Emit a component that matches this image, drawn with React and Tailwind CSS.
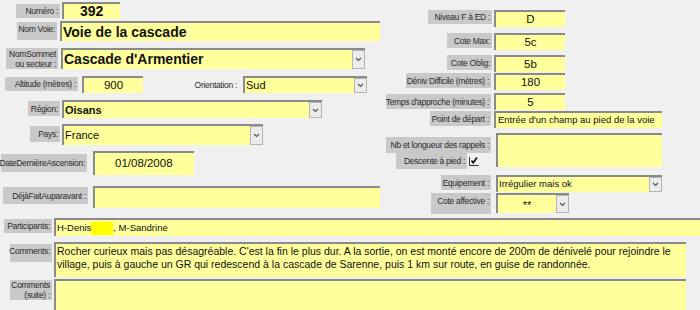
import React from "react";

const Label = ({ className = "", children }) => (
  <div
    className={`bg-[#c9c9c9] text-[#2a2a2a] text-[8.5px] leading-[10px] tracking-[-0.3px] whitespace-nowrap flex justify-end text-right pr-[2px] shrink-0 ${className}`}
  >
    {children}
  </div>
);

const Field = ({ className = "", children }) => (
  <div
    className={`bg-[#ffff9c] border-t-2 border-l-2 border-[#8a8a8a] flex shrink-0 overflow-hidden text-[#111] ${className}`}
  >
    {children}
  </div>
);

const Drop = () => (
  <div className="ml-auto w-[13px] h-full bg-[#ececec] border border-[#b4b4b4] flex items-center justify-center shrink-0">
    <svg width="7" height="5" viewBox="0 0 7 5">
      <path d="M1 1 L3.5 3.5 L6 1" stroke="#555" strokeWidth="1.2" fill="none" />
    </svg>
  </div>
);

export default function App() {
  return (
    <div className="w-[700px] h-[310px] bg-[#f0f0f0] overflow-hidden font-['Liberation_Sans',Arial,sans-serif]">
      <div className="flex h-[216px]">
        {/* Left column */}
        <div className="w-[380px] flex flex-col pt-[2px] shrink-0">
          <div className="flex h-[17px]">
            <Label className="ml-[16px] mt-[2px] w-[44px] h-[14px] items-center">Numéro :</Label>
            <Field className="ml-[2px] w-[58px] h-[17px] items-center pl-[16px] font-bold text-[14px]">392</Field>
          </div>
          <div className="flex h-[20px] mt-[2px]">
            <Label className="ml-[17px] mt-[1px] w-[40px] h-[18px] items-start pt-[2px]">Nom Voie:</Label>
            <Field className="ml-[3px] w-[320px] h-[20px] items-center pl-[1px] font-bold text-[14px] whitespace-nowrap">Voie de la cascade</Field>
          </div>
          <div className="flex h-[21px] mt-[7px]">
            <Label className="ml-[6px] w-[52px] h-[21px] items-center">NomSommet<br />ou secteur :</Label>
            <Field className="ml-[3px] w-[304px] h-[21px] items-center font-bold text-[14px] whitespace-nowrap">
              <span className="pl-[1px]">Cascade d'Armentier</span>
              <Drop />
            </Field>
          </div>
          <div className="flex h-[17px] mt-[7px]">
            <Label className="ml-[5px] mt-[1px] w-[73px] h-[14px] items-center">Altitude (mètres) :</Label>
            <Field className="ml-[4px] w-[61px] h-[17px] items-center justify-center text-[11.5px]">900</Field>
            <div className="ml-[50px] w-[47px] h-[17px] text-[8.5px] tracking-[-0.3px] whitespace-nowrap text-[#2a2a2a] flex items-center justify-end pt-[2px] pr-[3px]">Orientation :</div>
            <Field className="ml-[3px] w-[124px] h-[17px] items-center text-[11px]">
              <span className="pl-[1px]">Sud</span>
              <Drop />
            </Field>
          </div>
          <div className="flex h-[18px] mt-[7px]">
            <Label className="ml-[28px] mt-[1px] w-[32px] h-[15px] items-center">Région:</Label>
            <Field className="ml-[2px] w-[260px] h-[18px] items-center font-bold text-[11px]">
              <span className="pl-[1px]">Oisans</span>
              <Drop />
            </Field>
          </div>
          <div className="flex h-[21px] mt-[6px]">
            <Label className="ml-[30px] mt-[2px] w-[30px] h-[16px] items-center">Pays:</Label>
            <Field className="ml-[2px] w-[201px] h-[21px] items-start text-[11px]">
              <span className="pl-[1px] pt-[1px]">France</span>
              <Drop />
            </Field>
          </div>
          <div className="flex h-[24px] mt-[6px]">
            <Label className="ml-[1px] mt-[3px] w-[86px] h-[18px] items-center">DateDernièreAscension:</Label>
            <Field className="ml-[6px] w-[101px] h-[24px] items-start pl-[20px] pt-[2px] text-[11.5px]">01/08/2008</Field>
          </div>
          <div className="flex h-[22px] mt-[11px]">
            <Label className="ml-[3px] mt-[1px] w-[85px] h-[17px] items-center">DéjàFaitAuparavant :</Label>
            <Field className="ml-[5px] w-[287px] h-[22px]" />
          </div>
        </div>

        {/* Right column */}
        <div className="flex-1 flex flex-col pt-[10px]">
          <div className="flex h-[17px]">
            <Label className="ml-[48px] w-[64px] h-[14px] items-center">Niveau F à ED :</Label>
            <Field className="ml-[2px] w-[71px] h-[17px] items-center justify-center text-[11.5px]">D</Field>
          </div>
          <div className="flex h-[17px] mt-[6px]">
            <Label className="ml-[67px] w-[45px] h-[15px] items-center">Cote Max:</Label>
            <Field className="ml-[2px] w-[71px] h-[17px] items-center justify-center text-[11.5px]">5c</Field>
          </div>
          <div className="flex h-[17px] mt-[5px]">
            <Label className="ml-[67px] w-[45px] h-[15px] items-center">Cote Oblig:</Label>
            <Field className="ml-[2px] w-[71px] h-[17px] items-center justify-center text-[11.5px]">5b</Field>
          </div>
          <div className="flex h-[17px] mt-[1px]">
            <Label className="ml-[26px] w-[85px] h-[15px] items-center">Déniv Difficile (mètres) :</Label>
            <Field className="ml-[3px] w-[71px] h-[17px] items-center justify-center text-[11.5px]">180</Field>
          </div>
          <div className="flex h-[17px] mt-[3px]">
            <Label className="ml-[6px] mt-[1px] w-[105px] h-[15px] items-center">Temps d'approche (minutes) :</Label>
            <Field className="ml-[3px] w-[71px] h-[17px] items-center justify-center text-[11.5px]">5</Field>
          </div>
          <div className="flex h-[17px] mt-[1px]">
            <Label className="ml-[50px] w-[61px] h-[15px] items-center">Point de départ :</Label>
            <Field className="ml-[3px] w-[168px] h-[17px] items-center pl-[2px] text-[9.5px] whitespace-nowrap">Entrée d'un champ au pied de la voie</Field>
          </div>
          <div className="flex h-[34px] mt-[5px]">
            <div className="w-[114px] flex flex-col shrink-0">
              <Label className="ml-[6px] mt-[4px] w-[105px] h-[16px] items-center">Nb et longueur des rappels :</Label>
              <div className="flex">
                <Label className="ml-[16px] w-[71px] h-[16px] items-center">Descente à pied :</Label>
                <svg className="ml-[2px] mt-[3px]" width="10" height="10" viewBox="0 0 10 10">
                  <path d="M0.5 1 V9.5 H9.5" stroke="#333" strokeWidth="1" fill="none" />
                  <path d="M2.5 4.5 L4.2 6.8 L8 1.5" stroke="#111" strokeWidth="1.6" fill="none" />
                </svg>
              </div>
            </div>
            <Field className="ml-[2px] w-[166px] h-[34px]" />
          </div>
          <div className="flex h-[17px] mt-[8px]">
            <Label className="ml-[61px] w-[50px] h-[15px] items-center">Equipement :</Label>
            <Field className="ml-[5px] w-[166px] h-[17px] items-center text-[9.5px] whitespace-nowrap">
              <span className="pl-[1px]">Irrégulier mais ok</span>
              <Drop />
            </Field>
          </div>
          <div className="flex h-[21px] mt-[1px]">
            <Label className="ml-[51px] w-[60px] h-[21px] items-start pt-[3px]">Cote affective :</Label>
            <Field className="ml-[5px] w-[73px] h-[20px] items-center text-[11px]">
              <span className="flex-1 text-center pt-[3px]">**</span>
              <Drop />
            </Field>
          </div>
        </div>
      </div>

      {/* Bottom rows */}
      <div className="flex h-[18px] mt-[2px]">
        <Label className="ml-[4px] mt-[1px] w-[48px] h-[14px] items-center">Participants:</Label>
        <Field className="ml-[2px] flex-1 h-[18px] items-center pl-[1px] text-[9.5px] whitespace-nowrap">
          <span>H-Denis</span>
          <span className="inline-block w-[22px] h-[13px] bg-[#ffff00]" />
          <span>, M-Sandrine</span>
        </Field>
      </div>
      <div className="flex h-[35px] mt-[6px]">
        <Label className="ml-[10px] mt-[2px] w-[42px] h-[18px] items-start pt-[2px]">Comments:</Label>
        <Field className="ml-[2px] w-[632px] h-[35px] items-start pl-[1px] pt-[1px]">
          <p className="text-[10.5px] leading-[13px] whitespace-normal">
            Rocher curieux mais pas désagréable. C'est la fin le plus dur. A la sortie, on est monté encore de 200m de dénivelé pour rejoindre le village, puis à gauche un GR qui redescend à la cascade de Sarenne, puis 1 km sur route, en guise de randonnée.
          </p>
        </Field>
      </div>
      <div className="flex h-[31px] mt-[2px]">
        <Label className="ml-[10px] mt-[1px] w-[42px] h-[20px] items-center">Comments<br />(suite) :</Label>
        <Field className="ml-[2px] w-[632px] h-[31px]" />
      </div>
    </div>
  );
}
